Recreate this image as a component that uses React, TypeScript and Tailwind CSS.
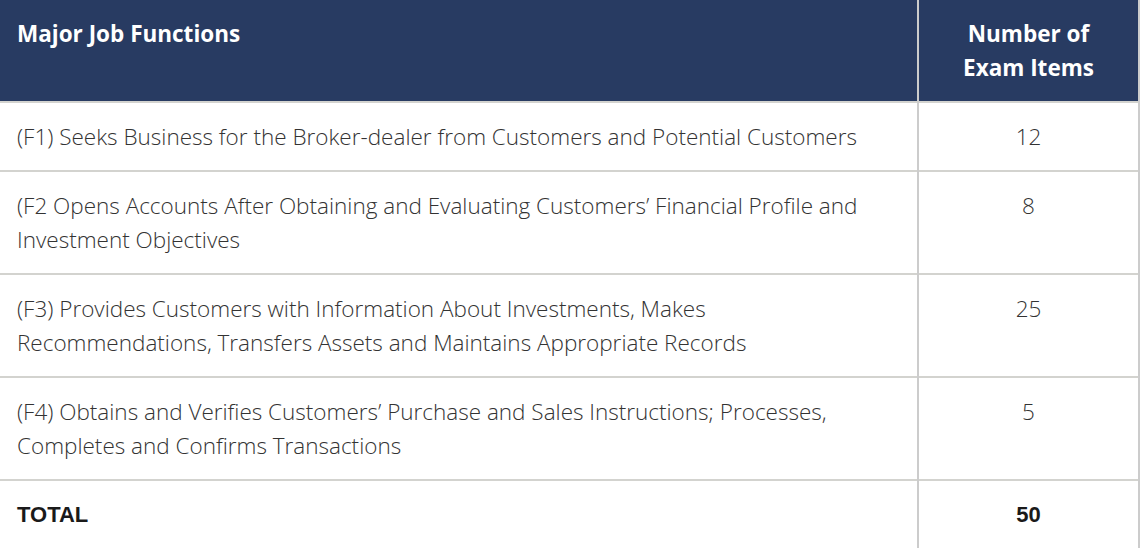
const ROWS = [
  { fn: "(F1) Seeks Business for the Broker-dealer from Customers and Potential Customers", items: "12" },
  { fn: "(F2 Opens Accounts After Obtaining and Evaluating Customers’ Financial Profile and Investment Objectives", items: "8" },
  { fn: "(F3) Provides Customers with Information About Investments, Makes Recommendations, Transfers Assets and Maintains Appropriate Records", items: "25" },
  { fn: "(F4) Obtains and Verifies Customers’ Purchase and Sales Instructions; Processes, Completes and Confirms Transactions", items: "5" },
];

export default function App() {
  return (
    <div className="w-[1140px] h-[548px] bg-white overflow-hidden font-['Open_Sans',sans-serif]">
      <table className="w-[1140px] border-collapse text-[22.5px] leading-[34px] text-[#333333]">
        <thead>
          <tr className="bg-[#283b62] text-white">
            <th className="w-[918px] align-top text-left font-bold pl-[17px] pr-4 pt-[17px] pb-[16px] border-r-2 border-r-[#cccccc]">
              Major Job Functions
            </th>
            <th className="align-top text-center font-bold px-4 pt-[17px] pb-[16px] border-r-2 border-r-[#cccccc]">
              Number of<br />Exam Items
            </th>
          </tr>
        </thead>
        <tbody>
          {ROWS.map((r) => (
            <tr key={r.items} className="border-t-2 border-t-[#d3d3cf]">
              <td className="align-top font-light pl-[17px] pr-[36px] pt-[17px] pb-[16px] border-r-2 border-r-[#cccccc]">{r.fn}</td>
              <td className="align-top font-light text-center pt-[17px] pb-[16px] border-r-2 border-r-[#cccccc]">{r.items}</td>
            </tr>
          ))}
          <tr className="border-t-2 border-t-[#d3d3cf]">
            <td className="align-top pl-[17px] pt-[17px] pb-[16px] text-[22px] font-bold text-[#1a1a1a] font-['Liberation_Sans',sans-serif] border-r-2 border-r-[#cccccc]">TOTAL</td>
            <td className="align-top text-center pt-[17px] pb-[16px] text-[22px] font-bold text-[#1a1a1a] font-['Liberation_Sans',sans-serif] border-r-2 border-r-[#cccccc]">50</td>
          </tr>
        </tbody>
      </table>
    </div>
  );
}
